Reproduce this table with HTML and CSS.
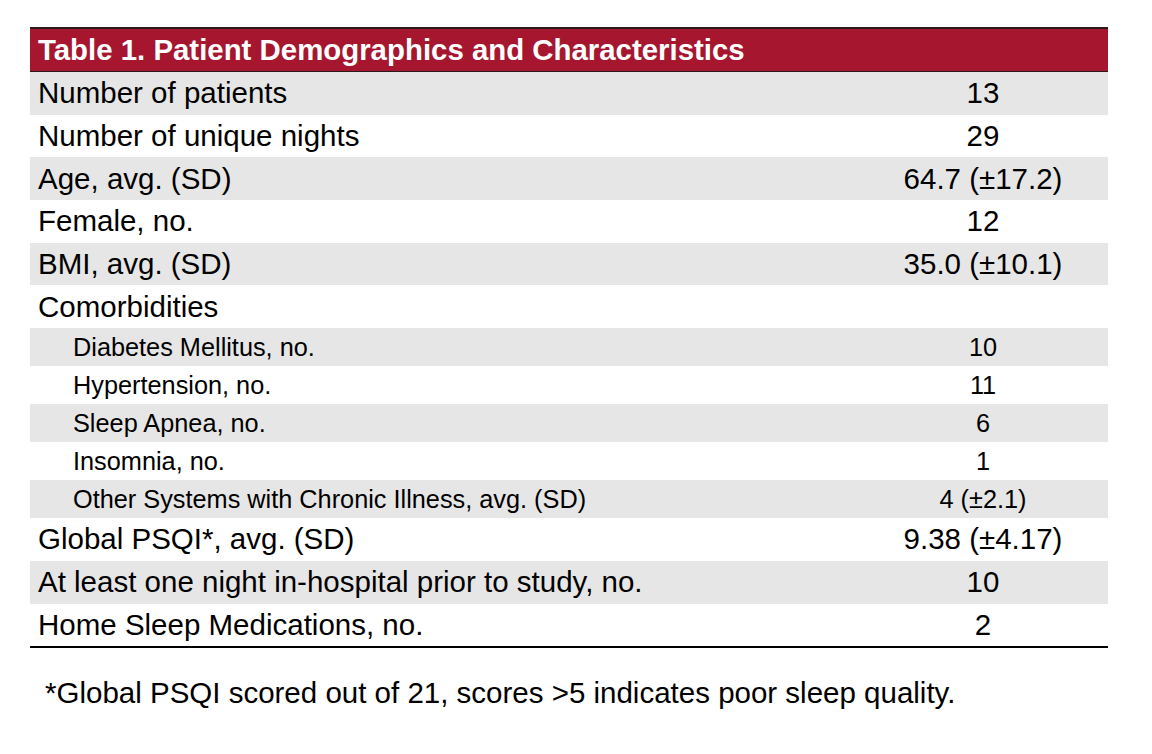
FILE: index.html
```html
<!DOCTYPE html>
<html lang="en">
<head>
<meta charset="utf-8">
<title>Table 1. Patient Demographics and Characteristics</title>
<link rel="stylesheet" href="styles.css">
</head>
<body>
<main class="page">
  <table class="demo">
    <colgroup>
      <col class="col-label">
      <col class="col-val">
    </colgroup>
    <thead>
      <tr class="head-row">
        <th colspan="2" class="title">Table 1. Patient Demographics and Characteristics</th>
      </tr>
    </thead>
    <tbody>
      <tr class="row big shade"><td class="label">Number of patients</td><td class="val">13</td></tr>
      <tr class="row big"><td class="label">Number of unique nights</td><td class="val">29</td></tr>
      <tr class="row big shade"><td class="label">Age, avg. (SD)</td><td class="val">64.7 (±17.2)</td></tr>
      <tr class="row big"><td class="label">Female, no.</td><td class="val">12</td></tr>
      <tr class="row big shade"><td class="label">BMI, avg. (SD)</td><td class="val">35.0 (±10.1)</td></tr>
      <tr class="row big"><td class="label">Comorbidities</td><td class="val"></td></tr>
      <tr class="row small shade"><td class="label sub">Diabetes Mellitus, no.</td><td class="val">10</td></tr>
      <tr class="row small"><td class="label sub">Hypertension, no.</td><td class="val">11</td></tr>
      <tr class="row small shade"><td class="label sub">Sleep Apnea, no.</td><td class="val">6</td></tr>
      <tr class="row small"><td class="label sub">Insomnia, no.</td><td class="val">1</td></tr>
      <tr class="row small shade"><td class="label sub">Other Systems with Chronic Illness, avg. (SD)</td><td class="val">4 (±2.1)</td></tr>
      <tr class="row big"><td class="label">Global PSQI*, avg. (SD)</td><td class="val">9.38 (±4.17)</td></tr>
      <tr class="row big shade"><td class="label">At least one night in-hospital prior to study, no.</td><td class="val">10</td></tr>
      <tr class="row big last"><td class="label">Home Sleep Medications, no.</td><td class="val">2</td></tr>
    </tbody>
  </table>
  <p class="note">*Global PSQI scored out of 21, scores &gt;5 indicates poor sleep quality.</p>
</main>
</body>
</html>
```

FILE: styles.css
```css
html, body {
  margin: 0;
  padding: 0;
  background: #ffffff;
}

body {
  font-family: "Liberation Sans", Arial, Helvetica, sans-serif;
  color: #000000;
}

.page {
  padding: 27px 0 0 30px;
}

.demo {
  width: 1078px;
  border-collapse: collapse;
  table-layout: fixed;
}

.col-label {
  width: 828px;
}

.col-val {
  width: 250px;
}

.title {
  height: 42px;
  padding: 0 0 0 8px;
  background: #a6162f;
  color: #ffffff;
  font-weight: 700;
  font-size: 29.4px;
  line-height: 34px;
  text-align: left;
  vertical-align: middle;
  border-top: 2px solid #2a1a1c;
  border-bottom: 1px solid #2a1a1c;
  white-space: nowrap;
}

.row td {
  padding: 0;
  vertical-align: middle;
  white-space: nowrap;
}

.row.big td {
  height: 42.7px;
  font-size: 29.5px;
  line-height: 34px;
}

.row.small td {
  height: 38px;
  font-size: 25.3px;
  line-height: 30px;
}

.row.shade td {
  background: #e6e6e6;
}

.row.last td {
  border-bottom: 2px solid #000000;
}

.row .label {
  padding-left: 8px;
}

.row .label.sub {
  padding-left: 43px;
}

.row .val {
  text-align: center;
}

.note {
  margin: 28px 0 0 15px;
  font-size: 29.5px;
  line-height: 34px;
}
```
